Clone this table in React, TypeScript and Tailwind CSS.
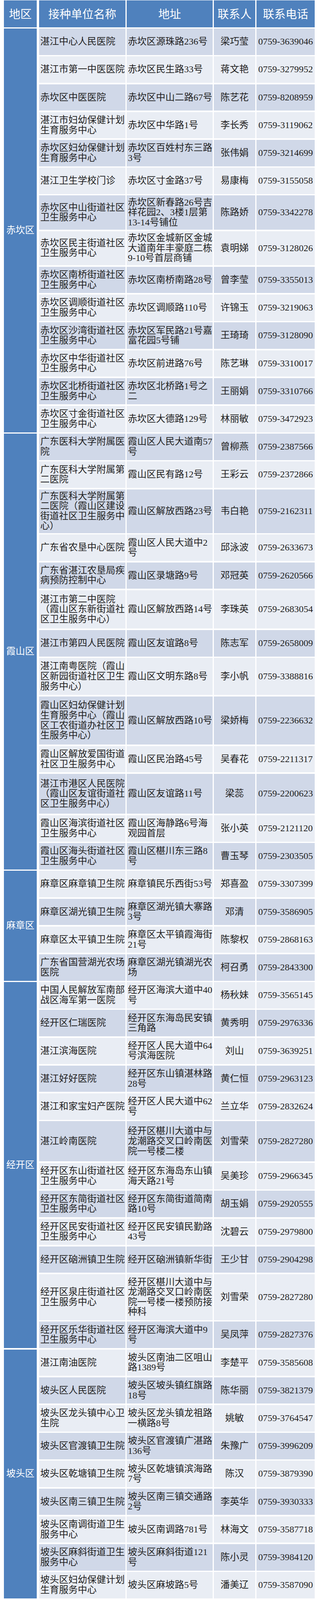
type Row = { n: string; a: string; p: string; t: string; h?: string };
type Region = { name: string; rows: Row[] };

// frame is captured 4096px tall, so every vertical size is the reference's times 0.913
const regions: Region[] = [
  {
    name: "赤坎区",
    rows: [
      { n: "湛江中心人民医院", a: "赤坎区源珠路236号", p: "梁巧莹", t: "0759-3639046" },
      { n: "湛江市第一中医医院", a: "赤坎区民生路33号", p: "蒋文艳", t: "0759-3279952" },
      { n: "赤坎区中医医院", a: "赤坎区中山二路67号", p: "陈艺花", t: "0759-8208959" },
      { n: "湛江市妇幼保健计划\n生育服务中心", a: "赤坎区中华路1号", p: "李长秀", t: "0759-3119062" },
      { n: "赤坎区妇幼保健计划\n生育服务中心", a: "赤坎区百姓村东三路\n3号", p: "张伟娟", t: "0759-3214699" },
      { n: "湛江卫生学校门诊", a: "赤坎区寸金路37号", p: "易康梅", t: "0759-3155058" },
      { n: "赤坎区中山街道社区\n卫生服务中心", a: "赤坎区新春路26号吉\n祥花园2、3楼1层第\n13-14号铺位", p: "陈路娇", t: "0759-3342278", h: "h-[87.65px]" },
      { n: "赤坎区民主街道社区\n卫生服务中心", a: "赤坎区金城新区金城\n大道南年丰豪庭二栋\n9-10号首层商铺", p: "袁明娣", t: "0759-3128026", h: "h-[87.65px]" },
      { n: "赤坎区南桥街道社区\n卫生服务中心", a: "赤坎区南桥南路28号", p: "曾李莹", t: "0759-3355013" },
      { n: "赤坎区调顺街道社区\n卫生服务中心", a: "赤坎区调顺路110号", p: "许锦玉", t: "0759-3219063" },
      { n: "赤坎区沙湾街道社区\n卫生服务中心", a: "赤坎区军民路21号嘉\n富花园5号铺", p: "王琦琦", t: "0759-3128090" },
      { n: "赤坎区中华街道社区\n卫生服务中心", a: "赤坎区前进路76号", p: "陈艺琳", t: "0759-3310017" },
      { n: "赤坎区北桥街道社区\n卫生服务中心", a: "赤坎区北桥路1号之\n二", p: "王丽娟", t: "0759-3310766" },
      { n: "赤坎区寸金街道社区\n卫生服务中心", a: "赤坎区大德路129号", p: "林丽敏", t: "0759-3472923" },
    ],
  },
  {
    name: "霞山区",
    rows: [
      { n: "广东医科大学附属医\n院", a: "霞山区人民大道南57\n号", p: "曾柳燕", t: "0759-2387566" },
      { n: "广东医科大学附属第\n二医院", a: "霞山区民有路12号", p: "王彩云", t: "0759-2372866" },
      { n: "广东医科大学附属第\n二医院（霞山区建设\n街道社区卫生服务中\n心）", a: "霞山区解放西路23号", p: "韦白艳", t: "0759-2162311", h: "h-[112.3px]" },
      { n: "广东省农垦中心医院", a: "霞山区人民大道中2\n号", p: "邱泳波", t: "0759-2633673" },
      { n: "广东省湛江农垦局疾\n病预防控制中心", a: "霞山区录塘路9号", p: "邓冠英", t: "0759-2620566" },
      { n: "湛江市第二中医院\n（霞山区东新街道社\n区卫生服务中心）", a: "霞山区解放西路14号", p: "李珠英", t: "0759-2683054", h: "h-[98.6px]" },
      { n: "湛江市第四人民医院", a: "霞山区友谊路8号", p: "陈志军", t: "0759-2658009" },
      { n: "湛江南粤医院（霞山\n区新园街道社区卫生\n服务中心）", a: "霞山区文明东路8号", p: "李小帆", t: "0759-3388816", h: "h-[95px]" },
      { n: "霞山区妇幼保健计划\n生育服务中心（霞山\n区工农街道办社区卫\n生服务中心）", a: "霞山区解放西路10号", p: "梁娇梅", t: "0759-2236632", h: "h-[123.3px]" },
      { n: "霞山区解放爱国街道\n社区卫生服务中心", a: "霞山区民治路45号", p: "吴春花", t: "0759-2211317" },
      { n: "湛江市港区人民医院\n（霞山区友谊街道社\n区卫生服务中心）", a: "霞山区友谊路11号", p: "梁蕊", t: "0759-2200623", h: "h-[102.3px]" },
      { n: "霞山区海滨街道社区\n卫生服务中心", a: "霞山区海静路6号海\n观园首层", p: "张小英", t: "0759-2121120" },
      { n: "霞山区海头街道社区\n卫生服务中心", a: "霞山区椹川东三路8\n号", p: "曹玉琴", t: "0759-2303505" },
    ],
  },
  {
    name: "麻章区",
    rows: [
      { n: "麻章区麻章镇卫生院", a: "麻章镇民乐西街53号", p: "郑喜盈", t: "0759-3307399" },
      { n: "麻章区湖光镇卫生院", a: "麻章区湖光镇大寨路\n3号", p: "邓清", t: "0759-3586905" },
      { n: "麻章区太平镇卫生院", a: "麻章区太平镇霞海街\n21号", p: "陈黎权", t: "0759-2868163" },
      { n: "广东省国营湖光农场\n医院", a: "麻章区湖光镇湖光农\n场", p: "柯召勇", t: "0759-2843300" },
    ],
  },
  {
    name: "经开区",
    rows: [
      { n: "中国人民解放军南部\n战区海军第一医院", a: "经开区海滨大道中40\n号", p: "杨秋妹", t: "0759-3565145" },
      { n: "经开区仁瑞医院", a: "经开区东海岛民安镇\n三角路", p: "黄秀明", t: "0759-2976336" },
      { n: "湛江滨海医院", a: "经开区人民大道中64\n号滨海医院", p: "刘山", t: "0759-3639251" },
      { n: "湛江好好医院", a: "经开区东山镇湛林路\n28号", p: "黄仁恒", t: "0759-2963123" },
      { n: "湛江和家宝妇产医院", a: "经开区人民大道中62\n号", p: "兰立华", t: "0759-2832624" },
      { n: "湛江岭南医院", a: "经开区椹川大道中与\n龙潮路交叉口岭南医\n院一号楼二楼", p: "刘雪荣", t: "0759-2827280", h: "h-[103.2px]" },
      { n: "经开区东山街道社区\n卫生服务中心", a: "经开区东海岛东山镇\n海天路21号", p: "吴美珍", t: "0759-2966345" },
      { n: "经开区东简街道社区\n卫生服务中心", a: "经开区东简街道简南\n路10号", p: "胡玉娟", t: "0759-2920555" },
      { n: "经开区民安街道社区\n卫生服务中心", a: "经开区民安镇民勤路\n43号", p: "沈碧云", t: "0759-2979800" },
      { n: "经开区硇洲镇卫生院", a: "经开区硇洲镇新华街", p: "王少甘", t: "0759-2904298" },
      { n: "经开区泉庄街道社区\n卫生服务中心", a: "经开区椹川大道中与\n龙潮路交叉口岭南医\n院一号楼一楼预防接\n种科", p: "刘雪荣", t: "0759-2827280", h: "h-[117.8px]" },
      { n: "经开区乐华街道社区\n卫生服务中心", a: "经开区海滨大道中9\n号", p: "吴凤萍", t: "0759-2827376" },
    ],
  },
  {
    name: "坡头区",
    rows: [
      { n: "湛江南油医院", a: "坡头区南油二区咀山\n路1389号", p: "李楚平", t: "0759-3585608" },
      { n: "坡头区人民医院", a: "坡头区坡头镇红旗路\n18号", p: "陈华丽", t: "0759-3821379" },
      { n: "坡头区龙头镇中心卫\n生院", a: "坡头区龙头镇龙祖路\n一横路8号", p: "姚敏", t: "0759-3764547" },
      { n: "坡头区官渡镇卫生院", a: "坡头区官渡镇广湛路\n136号", p: "朱豫广", t: "0759-3996209" },
      { n: "坡头区乾塘镇卫生院", a: "坡头区乾塘镇滨海路\n7号", p: "陈汉", t: "0759-3879390" },
      { n: "坡头区南三镇卫生院", a: "坡头区南三镇交通路\n2号", p: "李英华", t: "0759-3930333" },
      { n: "坡头区南调街道卫生\n服务中心", a: "坡头区南调路781号", p: "林海文", t: "0759-3587718" },
      { n: "坡头区麻斜街道卫生\n服务中心", a: "坡头区麻斜街道121\n号", p: "陈小灵", t: "0759-3984120" },
      { n: "坡头区妇幼保健计划\n生育服务中心", a: "坡头区麻坡路5号", p: "潘美辽", t: "0759-3587090" },
    ],
  },
];

const TableRow = ({ row, dark }: { row: Row; dark: boolean }) => {
  const bg = dark ? "bg-[#d0d8e8]" : "bg-[#e9edf4]";
  return (
    <div className={`flex gap-[3px] ${row.h ?? "h-[67.57px]"}`}>
      <div className={`w-[221px] flex items-center pl-[3px] whitespace-pre-line ${bg}`}>{row.n}</div>
      <div className={`w-[220px] flex items-center pl-[3px] whitespace-pre-line ${bg}`}>{row.a}</div>
      <div className={`w-[106px] flex items-center justify-center ${bg}`}>{row.p}</div>
      <div className={`w-[149px] flex items-center justify-center ${bg}`}>{row.t}</div>
    </div>
  );
};

export default function App() {
  let idx = 0;
  return (
    <div className="w-[816px] bg-white pt-px pl-[10px] font-['Liberation_Serif','Noto_Sans_CJK_SC',serif] text-[24px] leading-[25.6px] text-[#222]">
      <div className="flex flex-col gap-[3.65px]">
        {/* header */}
        <div className="flex gap-[6px] h-[68.5px] text-white text-[29px] font-['Noto_Sans_CJK_SC',sans-serif]">
          <div className="w-[84px] bg-[#4f81bd] flex items-center justify-center">地区</div>
          <div className="flex gap-[3px]">
            <div className="w-[221px] bg-[#4f81bd] flex items-center justify-center">接种单位名称</div>
            <div className="w-[220px] bg-[#4f81bd] flex items-center justify-center">地址</div>
            <div className="w-[106px] bg-[#4f81bd] flex items-center justify-center">联系人</div>
            <div className="w-[149px] bg-[#4f81bd] flex items-center justify-center">联系电话</div>
          </div>
        </div>

        {regions.map((region) => (
          <div key={region.name} className="flex gap-[6px]">
            <div className="w-[84px] shrink-0 bg-[#4f81bd] flex items-center justify-center text-white">
              {region.name}
            </div>
            <div className="flex flex-col gap-[3.65px]">
              {region.rows.map((row) => {
                idx += 1;
                return <TableRow key={idx} row={row} dark={idx % 2 === 1} />;
              })}
            </div>
          </div>
        ))}
      </div>
    </div>
  );
}
